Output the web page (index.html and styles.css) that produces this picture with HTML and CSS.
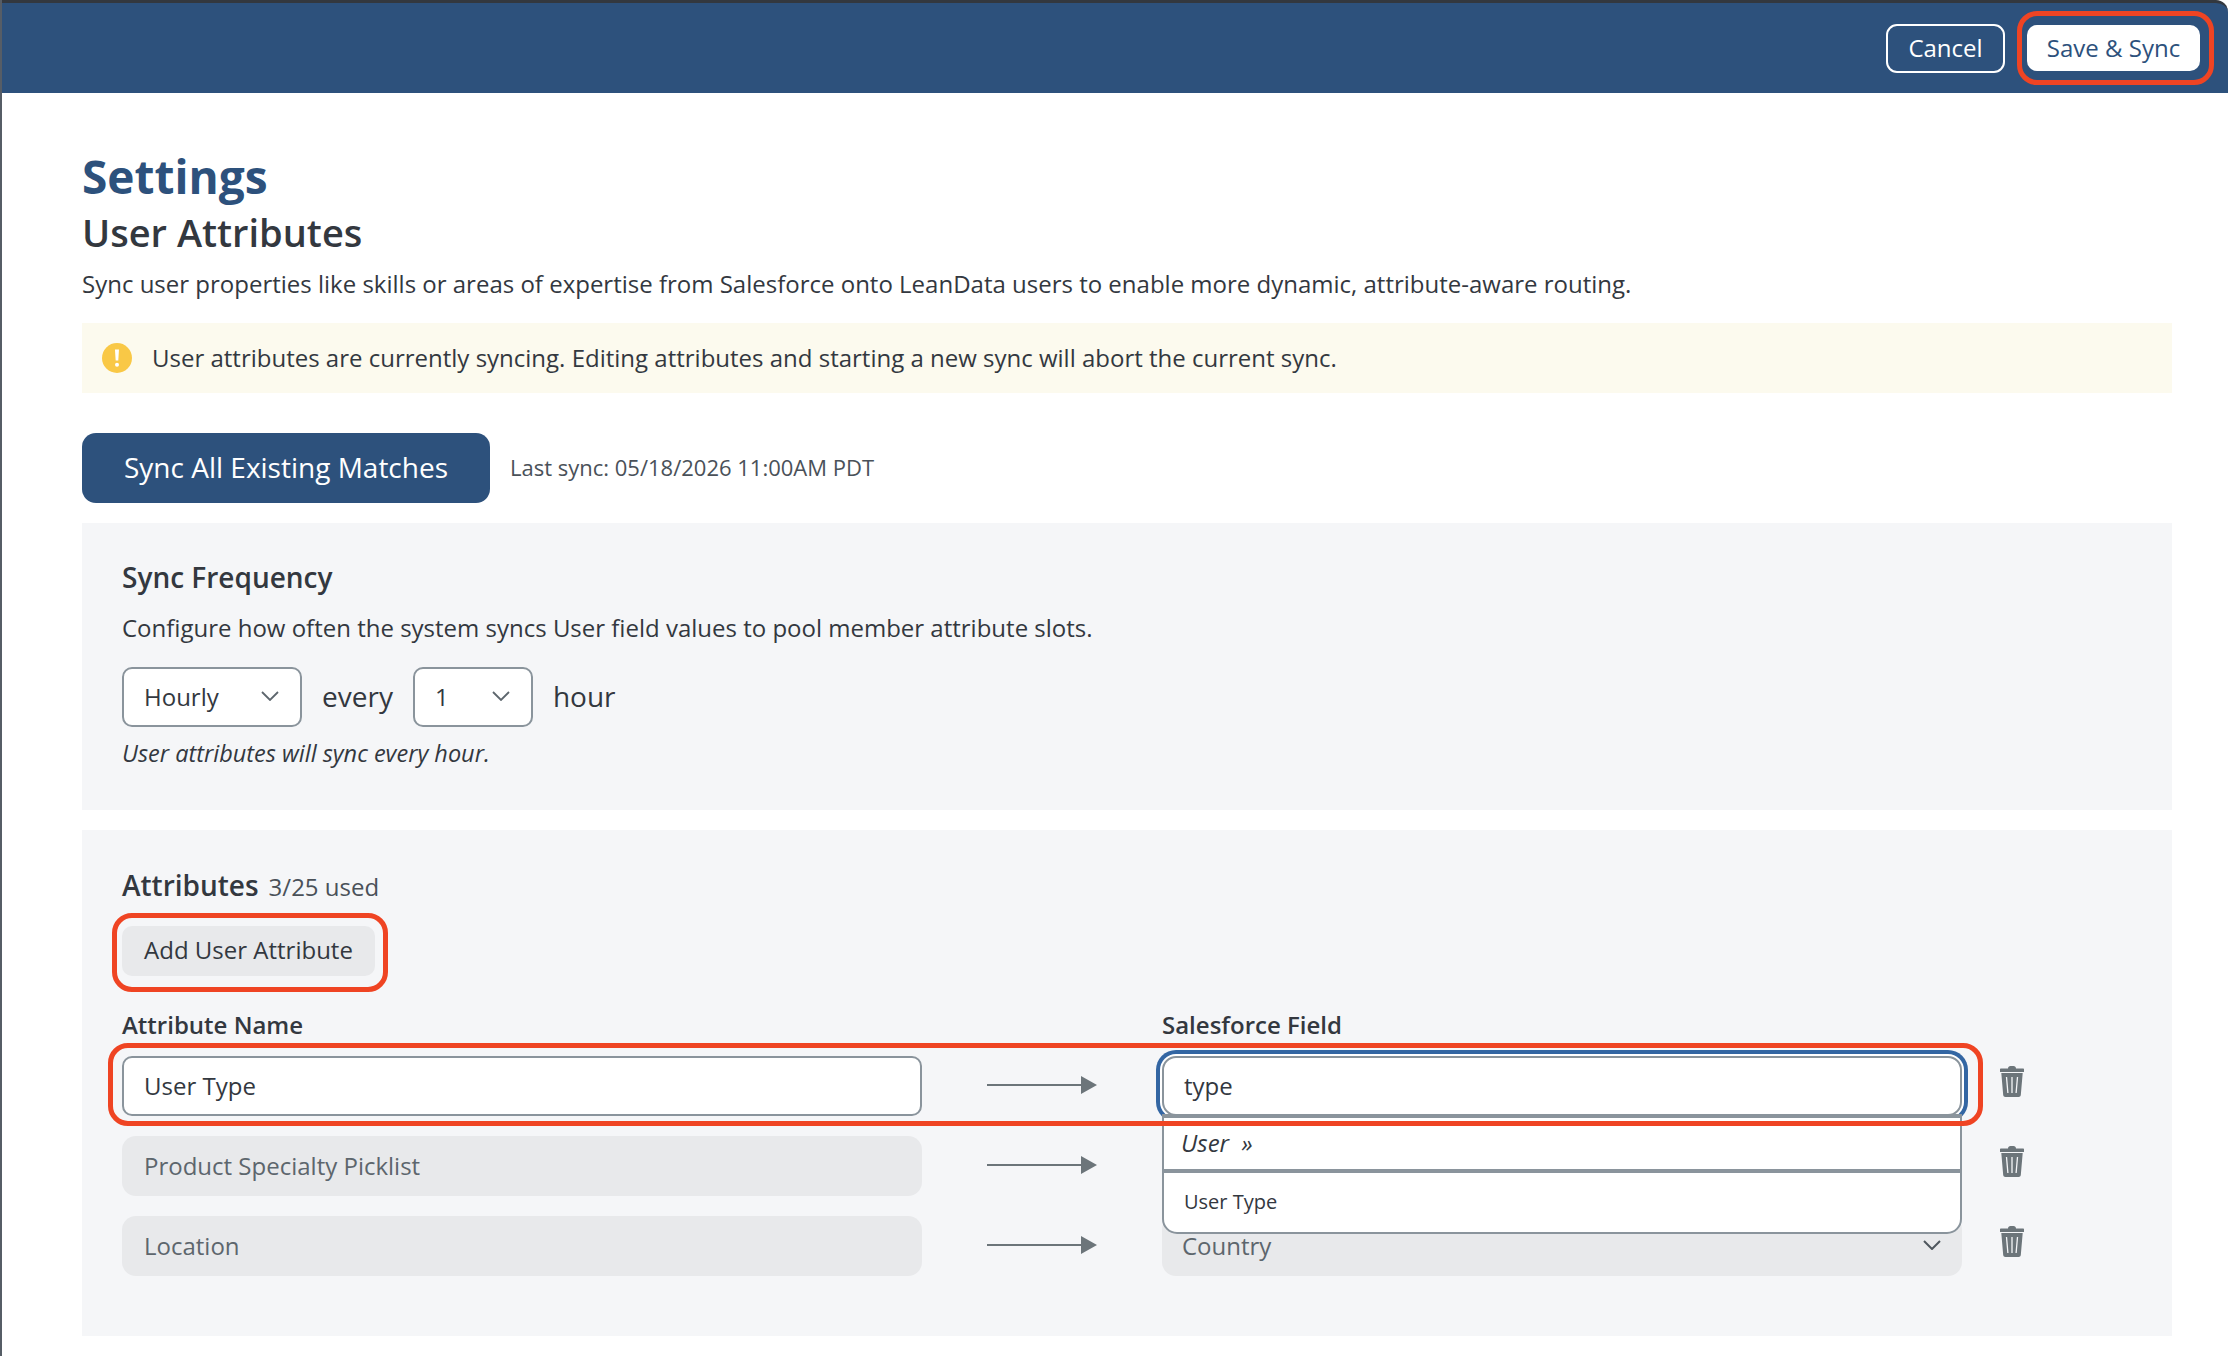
FILE: index.html
```html
<!DOCTYPE html>
<html lang="en">

<head>
    <meta charset="UTF-8">
    <meta name="viewport" content="width=device-width, initial-scale=1.0">
    <title>User Attributes</title>
    <link rel="stylesheet" href="styles.css">
</head>

<body>
    <header class="topbar">
        <button class="btn-cancel">Cancel</button>
        <div class="save-wrap">
            <button class="btn-save">Save &amp; Sync</button>
            <span class="callout callout-save"></span>
        </div>
    </header>

    <main class="page">
        <h1 class="title">Settings</h1>
        <h2 class="subtitle">User Attributes</h2>
        <p class="intro">Sync user properties like skills or areas of expertise from Salesforce onto LeanData users to enable more dynamic, attribute-aware routing.</p>

        <div class="warning">
            <svg class="warning-icon" width="30" height="30" viewBox="0 0 30 30">
                <circle cx="15" cy="15" r="15" fill="#f9c846"></circle>
                <path d="M13 6.500h4l-.7 11h-2.600z" fill="#fff"></path>
                <circle cx="15" cy="21.800" r="2" fill="#fff"></circle>
            </svg>
            <span>User attributes are currently syncing. Editing attributes and starting a new sync will abort the current sync.</span>
        </div>

        <div class="sync-row">
            <button class="btn-sync">Sync All Existing Matches</button>
            <span class="last-sync">Last sync: 05/18/2026 11:00AM PDT</span>
        </div>

        <section class="panel panel-frequency">
            <h3 class="panel-title">Sync Frequency</h3>
            <p class="panel-text">Configure how often the system syncs User field values to pool member attribute slots.</p>
            <div class="freq-row">
                <div class="select select-period">
                    <span>Hourly</span>
                    <svg class="chevron" width="18" height="10" viewBox="0 0 18 10"><path d="M1 1l8 8 8-8" fill="none" stroke="#5d666d" stroke-width="1.800"></path></svg>
                </div>
                <span class="freq-word">every</span>
                <div class="select select-count">
                    <span>1</span>
                    <svg class="chevron" width="18" height="10" viewBox="0 0 18 10"><path d="M1 1l8 8 8-8" fill="none" stroke="#5d666d" stroke-width="1.800"></path></svg>
                </div>
                <span class="freq-word">hour</span>
            </div>
            <p class="note">User attributes will sync every hour.</p>
        </section>

        <section class="panel panel-attributes">
            <div class="attr-head">
                <h3 class="panel-title">Attributes</h3>
                <span class="attr-count">3/25 used</span>
            </div>
            <div class="add-wrap">
                <button class="btn-add">Add User Attribute</button>
                <span class="callout callout-add"></span>
            </div>

            <div class="attr-grid attr-labels">
                <div>Attribute Name</div>
                <div></div>
                <div>Salesforce Field</div>
            </div>

            <div class="attr-rows">
                <div class="attr-grid attr-row attr-row-active">
                    <div class="field">User Type</div>
                    <svg class="arrow" width="110" height="18" viewBox="0 0 110 18"><path d="M0 8h95v2H0z M94 0l16 9-16 9z" fill="#6c757a"></path></svg>
                    <div class="field-wrap">
                        <div class="field field-focus">type</div>
                        <div class="dropdown">
                            <div class="dropdown-group">User&nbsp; »</div>
                            <div class="dropdown-item">User Type</div>
                        </div>
                    </div>
                    <svg class="trash" width="24" height="31" viewBox="0 0 24 31">
                        <path d="M8 2.500c0-1.500 1-2.500 2.500-2.500h3c1.500 0 2.500 1 2.500 2.500h7c.6 0 1 .4 1 1v2.500H0V3.500c0-.6.4-1 1-1z" fill="#6c757a"></path>
                        <path d="M1.300 7h21.400l-1.900 22c-.1 1.200-1 2-2.200 2H5.400c-1.200 0-2.100-.8-2.200-2z" fill="#6c757a"></path>
                        <path d="M6.500 11l1.400 16M12 11v16M17.500 11l-1.400 16" stroke="#f5f6f8" stroke-width="1.300" fill="none"></path>
                    </svg>
                    <span class="callout callout-row"></span>
                </div>

                <div class="attr-grid attr-row">
                    <div class="field field-disabled">Product Specialty Picklist</div>
                    <svg class="arrow" width="110" height="18" viewBox="0 0 110 18"><path d="M0 8h95v2H0z M94 0l16 9-16 9z" fill="#6c757a"></path></svg>
                    <div class="field field-disabled"></div>
                    <svg class="trash" width="24" height="31" viewBox="0 0 24 31">
                        <path d="M8 2.500c0-1.500 1-2.500 2.500-2.500h3c1.500 0 2.500 1 2.500 2.500h7c.6 0 1 .4 1 1v2.500H0V3.500c0-.6.4-1 1-1z" fill="#6c757a"></path>
                        <path d="M1.300 7h21.400l-1.900 22c-.1 1.200-1 2-2.200 2H5.400c-1.200 0-2.100-.8-2.200-2z" fill="#6c757a"></path>
                        <path d="M6.500 11l1.400 16M12 11v16M17.500 11l-1.400 16" stroke="#f5f6f8" stroke-width="1.300" fill="none"></path>
                    </svg>
                </div>

                <div class="attr-grid attr-row">
                    <div class="field field-disabled">Location</div>
                    <svg class="arrow" width="110" height="18" viewBox="0 0 110 18"><path d="M0 8h95v2H0z M94 0l16 9-16 9z" fill="#6c757a"></path></svg>
                    <div class="field field-disabled field-select">
                        <span>Country</span>
                        <svg class="chevron" width="18" height="10" viewBox="0 0 18 10"><path d="M1 1l8 8 8-8" fill="none" stroke="#4f575e" stroke-width="2"></path></svg>
                    </div>
                    <svg class="trash" width="24" height="31" viewBox="0 0 24 31">
                        <path d="M8 2.500c0-1.500 1-2.500 2.500-2.500h3c1.500 0 2.500 1 2.500 2.500h7c.6 0 1 .4 1 1v2.500H0V3.500c0-.6.4-1 1-1z" fill="#6c757a"></path>
                        <path d="M1.300 7h21.400l-1.900 22c-.1 1.200-1 2-2.200 2H5.400c-1.200 0-2.100-.8-2.200-2z" fill="#6c757a"></path>
                        <path d="M6.500 11l1.400 16M12 11v16M17.500 11l-1.400 16" stroke="#f5f6f8" stroke-width="1.300" fill="none"></path>
                    </svg>
                </div>
            </div>
        </section>
    </main>
</body>

</html>
```

FILE: styles.css
```css
* {
    box-sizing: border-box;
    padding: 0;
    margin: 0;
}

html {
    background-color: #fff;
}

body {
    font-family: "Open Sans", "Noto Sans", sans-serif;
    color: #33383f;
    font-size: 24px;
    border-left: 2px solid #565d66;
    min-height: 1356px;
}

button {
    font-family: inherit;
    cursor: pointer;
}

/* top bar */
.topbar {
    display: flex;
    justify-content: flex-end;
    align-items: center;
    height: 93px;
    padding-right: 28px;
    background-color: #2d517c;
    border-top: 3px solid #33383f;
    border-top-right-radius: 12px;
}

.btn-cancel {
    width: 119px;
    height: 49px;
    margin-right: 22px;
    padding-bottom: 2px;
    border: 2px solid #fff;
    border-radius: 11px;
    background-color: transparent;
    color: #fff;
    font-size: 24px;
}

.save-wrap {
    position: relative;
    display: flex;
}

.btn-save {
    width: 173px;
    height: 46px;
    padding-bottom: 2px;
    border: 0;
    border-radius: 10px;
    background-color: #fff;
    color: #2d517c;
    font-size: 24px;
}

/* red annotation rings */
.callout {
    position: absolute;
    border: 5px solid #ef4423;
    pointer-events: none;
    z-index: 3;
}

.callout-save {
    top: -14px;
    left: -10px;
    width: 197px;
    height: 74px;
    border-radius: 20px;
}

.callout-add {
    top: -13px;
    left: -10px;
    width: 276px;
    height: 79px;
    border-radius: 20px;
}

.callout-row {
    top: -13px;
    left: -14px;
    width: 1875px;
    height: 83px;
    border-radius: 20px;
}

/* page */
.page {
    padding: 53px 56px 20px 80px;
}

.title {
    font-size: 46px;
    line-height: 60px;
    font-weight: 700;
    color: #2d517c;
}

.subtitle {
    margin-top: 1px;
    font-size: 38px;
    line-height: 50px;
    font-weight: 600;
}

.intro {
    margin-top: 9px;
    line-height: 36px;
}

.warning {
    display: flex;
    align-items: center;
    gap: 20px;
    height: 70px;
    margin-top: 21px;
    padding-left: 20px;
    background-color: #fcfaee;
}

.warning span {
    padding-bottom: 2px;
}

.sync-row {
    display: flex;
    align-items: center;
    gap: 20px;
    margin-top: 40px;
}

.btn-sync {
    width: 408px;
    height: 70px;
    padding-bottom: 2px;
    border: 0;
    border-radius: 14px;
    background-color: #2d517c;
    color: #fff;
    font-size: 28px;
}

.last-sync {
    padding-bottom: 2px;
    font-size: 22px;
    color: #4a5159;
}

/* panels */
.panel {
    margin-top: 20px;
    padding-left: 40px;
    background-color: #f5f6f8;
}

.panel-frequency {
    height: 287px;
    padding-top: 36px;
}

.panel-attributes {
    height: 506px;
    padding-top: 37px;
}

.panel-title {
    font-size: 28px;
    line-height: 36px;
    font-weight: 600;
}

.panel-text {
    margin-top: 15px;
    line-height: 36px;
}

.freq-row {
    display: flex;
    align-items: center;
    gap: 20px;
    margin-top: 21px;
    font-size: 28px;
}

.freq-word {
    padding-bottom: 2px;
}

.select {
    display: flex;
    justify-content: space-between;
    align-items: center;
    height: 60px;
    padding: 0 21px 2px 20px;
    border: 2px solid #8a949c;
    border-radius: 10px;
    background-color: #fff;
    font-size: 24px;
}

.select-period {
    width: 180px;
}

.select-count {
    width: 120px;
}

.note {
    margin-top: 8px;
    line-height: 36px;
    font-size: 23.500px;
    font-style: italic;
}

/* attributes */
.attr-head {
    display: flex;
    align-items: baseline;
    gap: 10px;
}

.attr-count {
    color: #4a5159;
}

.add-wrap {
    position: relative;
    display: inline-flex;
    margin-top: 23px;
}

.btn-add {
    width: 253px;
    height: 50px;
    padding-bottom: 4px;
    border: 0;
    border-radius: 10px;
    background-color: #e8e9eb;
    color: #33383f;
    font-size: 24px;
}

.attr-grid {
    display: grid;
    grid-template-columns: 800px 240px 800px auto;
}

.attr-labels {
    margin-top: 34px;
    line-height: 30px;
    font-weight: 600;
}

.attr-rows {
    display: flex;
    flex-direction: column;
    gap: 20px;
    margin-top: 16px;
}

.attr-row {
    position: relative;
    align-items: center;
    justify-items: start;
    height: 60px;
}

.attr-row-active {
    z-index: 2;
}

.field {
    display: flex;
    align-items: center;
    width: 800px;
    height: 60px;
    padding: 0 20px 2px;
    border: 2px solid #8a949c;
    border-radius: 10px;
    background-color: #fff;
}

.field-disabled {
    border: 0;
    padding: 0 22px 2px;
    border-radius: 14px;
    background-color: #e8e9eb;
    color: #5d666d;
}

.field-select {
    justify-content: space-between;
    padding-left: 20px;
}

.field-select .chevron {
    margin-right: -1px;
}

.field-wrap {
    position: relative;
    width: 800px;
    height: 60px;
}

.field-focus {
    border-radius: 14px;
    box-shadow: 0 0 0 2px #fff, 0 0 0 6px #3366a3;
}

.dropdown {
    position: absolute;
    top: 58px;
    left: 0;
    width: 800px;
    height: 120px;
    border: 2px solid #8a949c;
    border-top-width: 4px;
    border-radius: 0 0 15px 15px;
    background-color: #fff;
}

.dropdown-group {
    display: flex;
    align-items: center;
    height: 55px;
    padding: 0 0 2px 17px;
    border-bottom: 4px solid #8a949c;
    font-style: italic;
}

.dropdown-item {
    display: flex;
    align-items: center;
    height: 59px;
    padding: 0 0 2px 20px;
    font-size: 20px;
}

.arrow {
    margin: -2px 0 0 65px;
}

.trash {
    margin: -9px 0 0 38px;
}
```
